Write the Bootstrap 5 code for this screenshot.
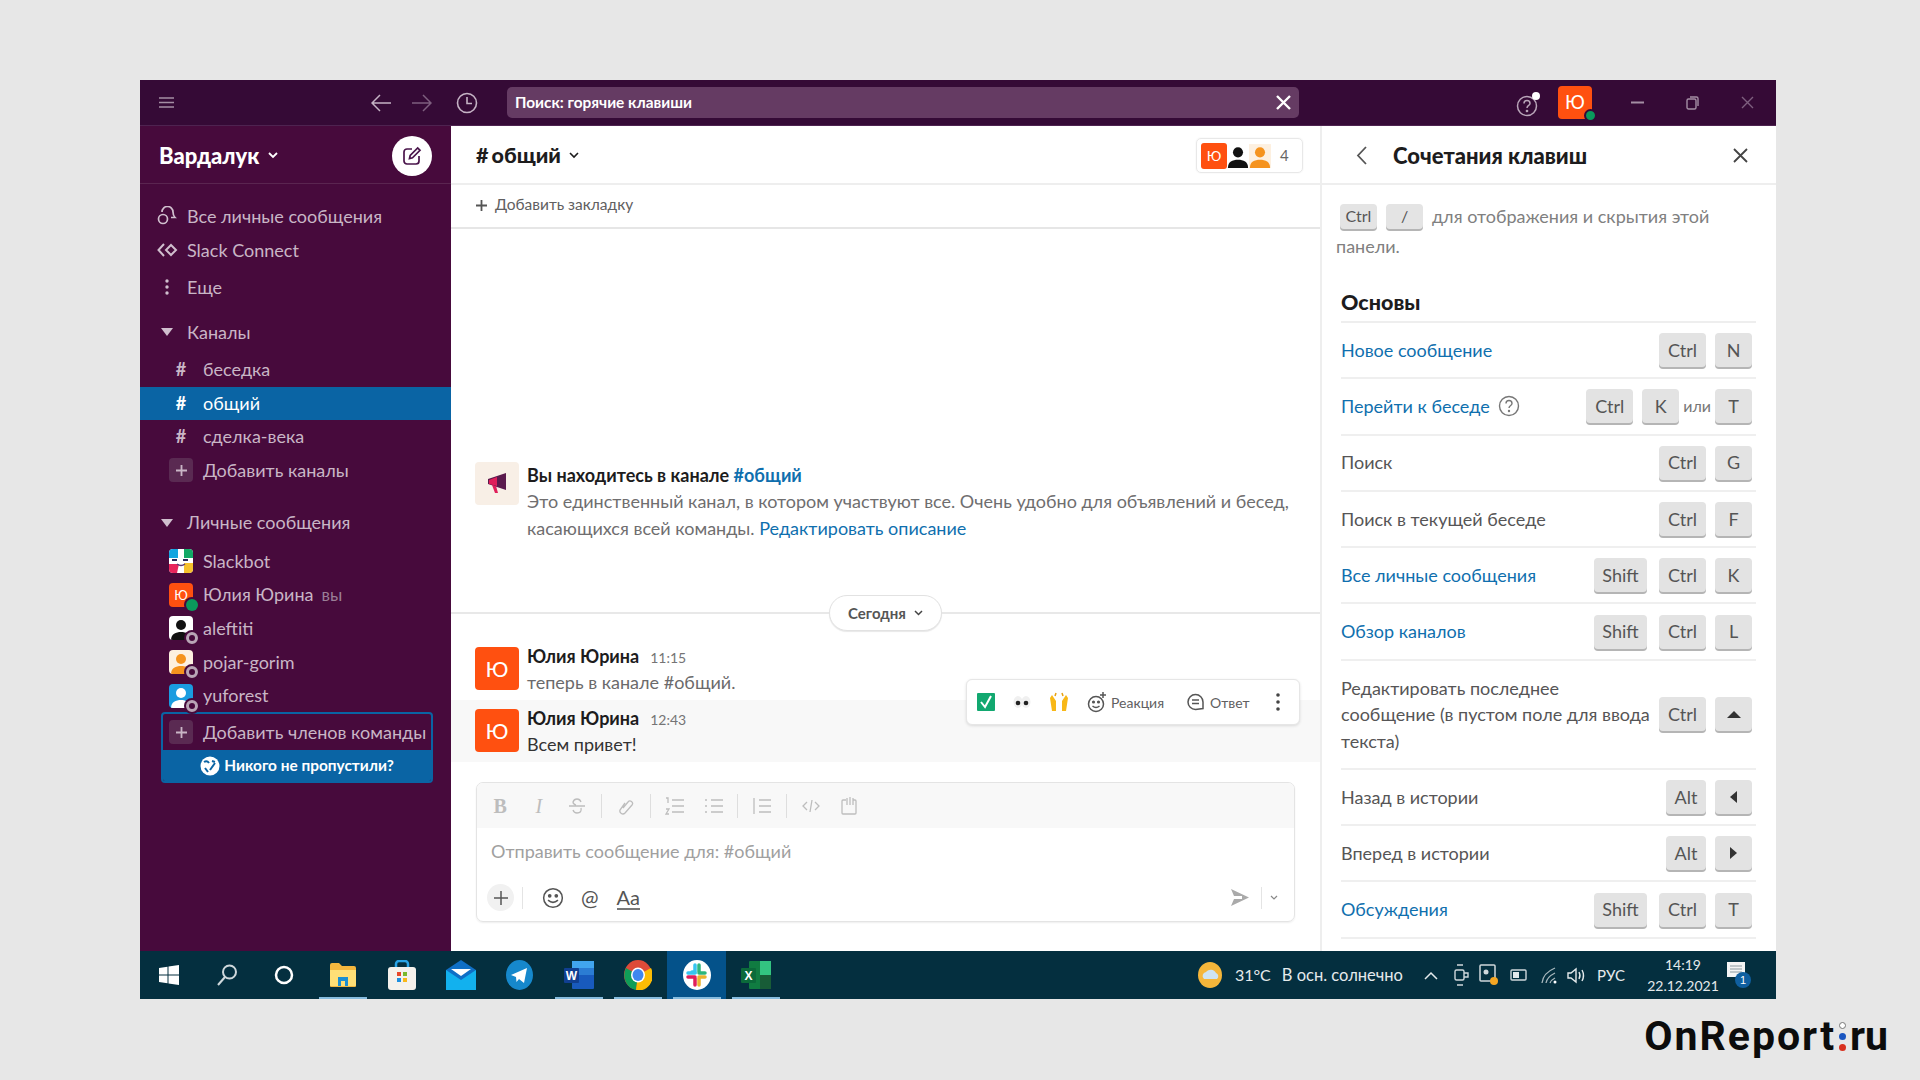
<!DOCTYPE html>
<html lang="ru">
<head>
    <meta charset="UTF-8">
    <title>Slack - сочетания клавиш</title>
    <link href="https://cdn.jsdelivr.net/npm/bootstrap@5.3.0/dist/css/bootstrap.min.css" rel="stylesheet">
    <style>
        body { background: #e7e7e7; font-family: Lato, "Noto Sans", "Open Sans", sans-serif; font-size: 18px; color: #1d1c1d; height: 1080px; overflow: hidden; }
        .shot { padding: 80px 144px 0 140px; }
        .app { width: 1636px; height: 919px; background: #fff; }
        /* title bar */
        .titlebar { height: 46px; background: #350a36; border-bottom: 1px solid #4e2350; color: #c5b3c5; }
        .tb-menu { width: 54px; padding-left: 19px; }
        .tb-nav { width: 313px; padding-right: 29px; gap: 21px; }
        .tb-hist { margin-left: 3px; }
        .searchbox { width: 792px; height: 31px; background: #653b63; border-radius: 5px; color: #fff; font-size: 15.4px; font-weight: 700; padding: 0 8px; }
        .tb-right { width: 477px; }
        .me-avatar { width: 34px; height: 33px; background: #ff5010; color: #fff; border-radius: 4px; font-size: 19px; margin-left: 18px; }
        .dot-on { position: absolute; right: -5px; bottom: -3px; width: 13px; height: 13px; background: #0a9a5c; border: 2px solid #350a36; border-radius: 50%; }
        /* sidebar */
        .mainrow { height: 825px; }
        .sidebar { width: 311px; background: #470a3c; color: #c9b6c6; flex: none; }
        .ws-head { height: 58px; border-bottom: 1px solid #5a2550; padding: 2px 19px 0 19px; margin-bottom: 15px; }
        .ws-name { color: #fff; font-size: 22px; font-weight: 900; }
        .compose { width: 40px; height: 40px; border-radius: 50%; background: #fff; }
        .side-item { height: 34px; display: flex; align-items: center; white-space: nowrap; }
        .side-top { padding-left: 16px; }
        .side-top .ic { width: 22px; margin-right: 9px; display: flex; justify-content: center; }
        .side-ch { padding-left: 29px; height: 33.5px; }
        .side-ch .ic { width: 24px; margin-right: 10px; display: flex; justify-content: center; font-weight: 700; font-size: 18px; }
        .side-ch.on { background: #0a64a4; color: #fff; }
        .side-dm { height: 33.6px; }
        .side-ava { width: 24px; height: 24px; border-radius: 4px; margin-right: 10px; position: relative; flex: none; overflow: visible; }
        .side-ava svg { display: block; border-radius: 4px; }
        .you-tag { font-size: 17px; color: #9a7f97; }
        .dot-off { position: absolute; right: -5px; bottom: -4px; width: 12px; height: 12px; border-radius: 50%; background: #b9a5b6; border: 3px solid #b9a5b6; box-shadow: 0 0 0 2px #470a3c; }
        .dot-off::after { content: ""; display: block; width: 6px; height: 6px; margin: 0; border-radius: 50%; background: #470a3c; }
        .dot-green { position: absolute; right: -5px; bottom: -4px; width: 12px; height: 12px; border-radius: 50%; background: #0a9a5c; box-shadow: 0 0 0 2px #470a3c; }
        .addbox { width: 272px; margin: 0 0 0 21px; border: 2px solid #0a64a4; border-radius: 4px; height: 71px; overflow: hidden; }
        .addbox .side-item { height: 36px; padding-left: 6px; }
        .add-plus { width: 24px; height: 24px; border-radius: 4px; background: #5a2a52; display: flex; align-items: center; justify-content: center; margin-right: 10px; flex: none; }
        .add-cta { height: 31px; background: #0a64a4; color: #fff; font-size: 15.4px; font-weight: 700; }
        /* channel */
        .channel { width: 871px; flex: none; border-right: 2px solid #eeeeee; }
        .ch-head { height: 59px; border-bottom: 2px solid #eeeeee; padding: 2px 17px 0 25px; }
        .ch-title { font-size: 21.5px; font-weight: 900; }
        .ch-hash { margin-right: 3px; }
        .members { width: 107px; height: 35px; border: 1px solid #e8e8e8; border-radius: 5px; padding: 0 4px; box-shadow: 0 0 2px #eee; }
        .mem-a { width: 26px; height: 26px; background: #ff5010; color: #fff; border-radius: 3px; font-size: 14px; }
        .mem-n { font-size: 15px; color: #666; margin-left: 9px; }
        .bookmarks { height: 44px; border-bottom: 2px solid #e6e6e6; padding: 0 0 2px 25px; color: #616061; font-size: 15.5px; }
        .chat { position: relative; }
        .intro { padding: 0 20px 0 24px; margin-bottom: 54px; line-height: 26.5px; color: #6f6e6f; }
        .intro-ic { width: 44px; height: 43px; background: #f8efe6; border-radius: 4px; margin-right: 8px; flex: none; }
        .t-blue { color: #0f6fae; }
        .t-dark { color: #1d1c1d; font-weight: 700; }
        .daysep { height: 35px; margin-bottom: 17px; position: relative; }
        .daysep::before { content: ""; position: absolute; left: 0; right: 0; top: 17px; height: 2px; background: #e8e8e8; }
        .daypill { position: relative; width: 113px; height: 36px; background: #fff; border: 1px solid #e2e2e2; border-radius: 18px; font-size: 15px; font-weight: 700; color: #555; box-shadow: 0 1px 1px #e8e8e8; }
        .msg { padding: 0 24px; line-height: 26px; color: #6b6a6b; }
        .msg-first { height: 53px; }
        .msg-next { height: 62px; background: #f8f8f8; padding-top: 9px; color: #333; }
        .msg-ava { width: 44px; height: 43px; background: #ff5010; color: #fff; border-radius: 4px; font-size: 22px; margin-right: 8px; flex: none; }
        .msg-text { margin-top: -4px; }
        .msg-head { height: 26px; }
        .msg-name { color: #1d1c1d; font-weight: 700; }
        .msg-time { font-size: 14px; line-height: 1; color: #757475; margin-left: 11px; }
        .hoverbar { position: absolute; right: 20px; bottom: 37px; width: 334px; height: 46px; background: #fff; border: 1px solid #e6e6e6; border-radius: 6px; box-shadow: 0 1px 3px rgba(0,0,0,.12); padding: 0 19px 0 10px; font-size: 14px; color: #616061; gap: 18px; }
        .hb-reply { margin-left: 4px; }
        .composer { height: 140px; margin: 20px 25px 29px 25px; border: 1px solid #e4e4e4; border-radius: 7px; box-shadow: 0 1px 2px #eee; overflow: hidden; }
        .fmt-bar { height: 45px; background: #f8f8f8; padding-left: 4px; color: #bdbdbd; }
        .fmt-btn { width: 38.5px; display: flex; align-items: center; justify-content: center; font-size: 20px; flex: none; }
        .fmt-serif { font-family: "Liberation Serif", serif; }
        .fmt-sep { width: 1px; height: 24px; background: #dedede; margin: 0 4.6px; flex: none; }
        .placeholder-txt { height: 46px; padding-left: 14px; color: #a0a0a0; font-size: 18px; }
        .cmp-foot { padding: 0 10px; height: 47px; color: #555; }
        .cmp-plus { width: 27px; height: 27px; border-radius: 50%; background: #f1f1f1; }
        .cmp-sep { width: 1px; height: 22px; background: #e4e4e4; }
        .cmp-emoji { margin-left: 11px; }
        .cmp-at { margin-left: 17px; font-size: 21px; }
        .cmp-aa { margin-left: 18px; font-size: 20px; line-height: 22px; border-bottom: 2px solid #777; }
        .cmp-send { margin-right: 4px; }
        .cmp-chev { margin-right: 6px; }
        /* shortcuts */
        .pane { width: 454px; flex: none; }
        .pane-head { height: 59px; border-bottom: 2px solid #eeeeee; padding: 2px 28px 0 34px; }
        .pane-title { font-size: 22px; font-weight: 900; margin-left: 26px; }
        .pane-body { padding: 16px 20px 0 19px; color: #616061; }
        .pane-hint { line-height: 30px; color: #808080; margin-left: -5px; }
        .pane-hint .keycap { height: 25px; font-size: 16px; margin-right: 5px; margin-left: 4px; background: #e4e4e4; }
        .hk-ctrl { width: 36px; min-width: 36px; }
        .hk-slash { width: 35px; min-width: 35px; }
        .sect { font-size: 21.5px; font-weight: 900; color: #1d1c1d; height: 41px; line-height: 40px; margin-top: 21px; border-bottom: 2px solid #eeeeee; }
        .sc-row { min-height: 56.3px; border-bottom: 2px solid #efefef; padding-right: 4px; color: #565556; line-height: 26.5px; }
        .sc-row.tall { height: 109px; }
        .sc-keys { gap: 9px; flex: none; margin-left: 8px; }
        .keycap { display: inline-flex; align-items: center; justify-content: center; height: 34px; padding: 0 9px; min-width: 37px; background: #e3e3e3; border-radius: 4px; box-shadow: 0 2px 0 #b5b5b5; color: #555; font-size: 18px; }
        .k-ctrl { width: 47px; }
        .k-shift { width: 53px; margin-right: 3px; }
        .k-alt { width: 40px; }
        .or-txt { color: #777; font-size: 16px; margin: 0 -5px; }
        /* taskbar */
        .taskbar { height: 48px; background: #042f3f; color: #e4eaec; font-size: 16px; }
        .tk-slot { width: 59px; height: 48px; display: flex; align-items: center; justify-content: center; flex: none; }
        .tk-open { background-image: linear-gradient(#86bcdf, #86bcdf); background-position: center bottom; background-size: 48px 2px; background-repeat: no-repeat; }
        .tk-active { background-color: #04528a; }
        .tray { padding-right: 24px; }
        .clock { font-size: 14px; line-height: 21px; text-align: center; width: 76px; }
        /* watermark */
        .onrep { width: 1748px; padding-top: 17px; font-family: Roboto, "Liberation Sans", sans-serif; font-size: 41px; font-weight: 700; color: #0c0c0c; line-height: 40px; }
        .onrep-name { letter-spacing: 2px; }
        .rdots { gap: 4px; margin: 0 4px 0 3px; }
        .rdots i { display: block; width: 7px; height: 7px; border-radius: 50%; }
        .rd-w { background: #fff; border: 1px solid #777; }
        .rd-b { background: #1a55c0; }
        .rd-r { background: #d8301e; }
    </style>
</head>
<body>
<div class="shot">
<div class="app d-flex flex-column">

    <!-- title bar -->
    <div class="titlebar d-flex align-items-center flex-none">
        <div class="tb-menu d-flex align-items-center">
            <svg width="15" height="13" viewBox="0 0 15 13" fill="none" stroke="#a48ea4" stroke-width="1.6"><path d="M0 2h15M0 6.500h15M0 11h15"/></svg>
        </div>
        <div class="tb-nav d-flex align-items-center justify-content-end">
            <svg width="20" height="18" viewBox="0 0 20 18" fill="none" stroke="#c5b3c5" stroke-width="1.5"><path d="M9 1 1 9l8 8M1 9h19"/></svg>
            <svg width="20" height="18" viewBox="0 0 20 18" fill="none" stroke="#7e5f7f" stroke-width="1.5"><path d="m11 1 8 8-8 8M19 9H0"/></svg>
            <svg class="tb-hist" width="22" height="22" viewBox="0 0 22 22" fill="none" stroke="#c5b3c5" stroke-width="1.6"><circle cx="11" cy="11" r="9.500"/><path d="M11 5v6.500h5"/></svg>
        </div>
        <div class="searchbox d-flex align-items-center justify-content-between">
            <span>Поиск: горячие клавиши</span>
            <svg width="15" height="15" viewBox="0 0 15 15" fill="none" stroke="#fff" stroke-width="2.400"><path d="m1 1 13 13M14 1 1 14"/></svg>
        </div>
        <div class="tb-right d-flex align-items-center">
            <div class="position-relative" style="margin-left:217px">
                <svg width="24" height="26" viewBox="0 0 24 26" fill="none" stroke="#b9a5b9" stroke-width="1.500"><circle cx="11" cy="15" r="9.500"/><path d="M8 12.500c0-4 6-4 6 0 0 2-3 2-3 4.500"/><circle cx="11" cy="20" r=".6"/><circle cx="20" cy="5" r="4" fill="#fff" stroke="none"/></svg>
            </div>
            <div class="me-avatar d-flex align-items-center justify-content-center position-relative">Ю<span class="dot-on"></span></div>
            <svg style="margin-left:39px" width="13" height="3" viewBox="0 0 13 3"><path d="M0 1.500h13" stroke="#a48ea4" stroke-width="2"/></svg>
            <svg style="margin-left:42px" width="13" height="14" viewBox="0 0 13 14" fill="none" stroke="#a48ea4" stroke-width="1.400"><rect x="1" y="3" width="9" height="10" rx="1.500"/><path d="M4 1h6.500A1.500 1.500 0 0 1 12 2.500V10"/></svg>
            <svg style="margin-left:42px" width="13" height="13" viewBox="0 0 13 13" fill="none" stroke="#7e5f7f" stroke-width="1.400"><path d="m1 1 11 11M12 1 1 12"/></svg>
        </div>
    </div>

    <div class="mainrow d-flex">

        <!-- sidebar -->
        <div class="sidebar">
            <div class="ws-head d-flex align-items-center justify-content-between">
                <div class="d-flex align-items-center gap-2"><span class="ws-name">Вардалук</span>
                    <svg width="10" height="7" viewBox="0 0 10 7" fill="none" stroke="#fff" stroke-width="1.800"><path d="m1 1 4 4 4-4"/></svg></div>
                <div class="compose d-flex align-items-center justify-content-center">
                    <svg width="20" height="20" viewBox="0 0 20 20" fill="none" stroke="#4a154b" stroke-width="1.700"><path d="M17 10v5a3 3 0 0 1-3 3H5a3 3 0 0 1-3-3V6a3 3 0 0 1 3-3h5"/><path d="m7.500 12.500.7-3L15.700 2l2.300 2.300-7.500 7.500z"/></svg>
                </div>
            </div>
            <div class="side-item side-top"><span class="ic"><svg width="20" height="20" viewBox="0 0 20 20" fill="none" stroke="#d0bfce" stroke-width="1.700"><circle cx="6" cy="13" r="4.500"/><path d="M5 6a5.500 5.500 0 0 1 11 0c0 2 .5 4 2 5.500h-4"/></svg></span>Все личные сообщения</div>
            <div class="side-item side-top"><span class="ic"><svg width="21" height="14" viewBox="0 0 21 14" fill="none" stroke="#d0bfce" stroke-width="2"><path d="M7 1 1.500 7 7 13"/><path d="m14 2 5 5-5 5-5-5z"/></svg></span>Slack Connect</div>
            <div class="side-item side-top" style="margin-top:3px"><span class="ic"><svg width="4" height="16" viewBox="0 0 4 16" fill="#d0bfce"><circle cx="2" cy="2" r="1.700"/><circle cx="2" cy="8" r="1.700"/><circle cx="2" cy="14" r="1.700"/></svg></span>Еще</div>
            <div class="side-item side-top" style="margin-top:11px"><span class="ic"><svg width="12" height="8" viewBox="0 0 12 8" fill="#d0bfce"><path d="M0 0h12L6 8z"/></svg></span>Каналы</div>
            <div class="side-item side-ch" style="margin-top:4px"><span class="ic">#</span>беседка</div>
            <div class="side-item side-ch on"><span class="ic">#</span>общий</div>
            <div class="side-item side-ch"><span class="ic">#</span>сделка-века</div>
            <div class="side-item side-ch"><span class="add-plus"><svg width="11" height="11" viewBox="0 0 12 12" stroke="#c9b6c6" stroke-width="2"><path d="M6 0v12M0 6h12"/></svg></span>Добавить каналы</div>
            <div class="side-item side-top" style="margin-top:18.500px"><span class="ic"><svg width="12" height="8" viewBox="0 0 12 8" fill="#d0bfce"><path d="M0 0h12L6 8z"/></svg></span>Личные сообщения</div>

            <div class="side-item side-ch side-dm" style="margin-top:5px"><span class="side-ava">
                <svg width="24" height="24" viewBox="0 0 24 24"><rect width="24" height="24" fill="#fff"/><path d="M0 0h9v9H0z" fill="#12a5e0"/><path d="M15 0h9v9h-9z" fill="#12a866"/><path d="M0 15h10l-2 9H0z" fill="#e8255c"/><path d="M15 14h9v10h-9z" fill="#f6c02c"/><path d="M3 11h18" stroke="#2c2c5a" stroke-width="2" stroke-dasharray="5 6"/><path d="M8 15q4 3 8 0" stroke="#5c3a78" fill="none" stroke-width="1.500"/></svg></span>Slackbot</div>
            <div class="side-item side-ch side-dm"><span class="side-ava"><svg width="24" height="24" viewBox="0 0 24 24"><rect width="24" height="24" fill="#ff5010"/><text x="12" y="17" font-size="13" fill="#fff" text-anchor="middle" font-family="Lato, Noto Sans, sans-serif">Ю</text></svg><span class="dot-green"></span></span>Юлия Юрина<span class="ms-2 you-tag">вы</span></div>
            <div class="side-item side-ch side-dm"><span class="side-ava"><svg width="24" height="24" viewBox="0 0 24 24"><rect width="24" height="24" fill="#fff"/><circle cx="12" cy="9" r="5" fill="#111"/><path d="M2 24c0-6 5-8 10-8s10 2 10 8z" fill="#111"/></svg><span class="dot-off"></span></span>aleftiti</div>
            <div class="side-item side-ch side-dm"><span class="side-ava"><svg width="24" height="24" viewBox="0 0 24 24"><rect width="24" height="24" fill="#fdf0e0"/><circle cx="12" cy="9" r="5" fill="#f5931e"/><path d="M2 24c0-6 5-8 10-8s10 2 10 8z" fill="#f5931e"/></svg><span class="dot-off"></span></span>pojar-gorim</div>
            <div class="side-item side-ch side-dm"><span class="side-ava"><svg width="24" height="24" viewBox="0 0 24 24"><rect width="24" height="24" fill="#1a9ce0"/><circle cx="12" cy="9" r="5" fill="#fff"/><path d="M2 24c0-6 5-8 10-8s10 2 10 8z" fill="#fff"/></svg><span class="dot-off"></span></span>yuforest</div>

            <div class="addbox">
                <div class="side-item"><span class="add-plus"><svg width="11" height="11" viewBox="0 0 12 12" stroke="#c9b6c6" stroke-width="2"><path d="M6 0v12M0 6h12"/></svg></span>Добавить членов команды</div>
                <div class="add-cta d-flex align-items-center justify-content-center gap-1">
                    <svg width="20" height="20" viewBox="0 0 20 20"><circle cx="10" cy="10" r="9.500" fill="#fff"/><path d="M4 6q3-2 5 1M5 12l3 4M10 14l5-7M12 5l3 1" fill="none" stroke="#0a64a4" stroke-width="2"/></svg>
                    <span>Никого не пропустили?</span>
                </div>
            </div>
        </div>

        <!-- channel -->
        <div class="channel d-flex flex-column">
            <div class="ch-head d-flex align-items-center justify-content-between">
                <div class="d-flex align-items-center gap-2"><span class="ch-title"><span class="ch-hash">#</span>общий</span>
                    <svg width="10" height="7" viewBox="0 0 10 7" fill="none" stroke="#1d1c1d" stroke-width="1.600"><path d="m1 1 4 4 4-4"/></svg></div>
                <div class="members d-flex align-items-center">
                    <span class="mem-a d-flex align-items-center justify-content-center">Ю</span>
                    <svg width="22" height="26" viewBox="0 0 24 26"><rect width="24" height="26" fill="#fff"/><circle cx="12" cy="9" r="5.500" fill="#111"/><path d="M1 26c0-7 5-9 11-9s11 2 11 9z" fill="#111"/></svg>
                    <svg width="22" height="26" viewBox="0 0 24 26"><rect width="24" height="26" fill="#fdf0e0"/><circle cx="12" cy="9" r="5.500" fill="#f5931e"/><path d="M1 26c0-7 5-9 11-9s11 2 11 9z" fill="#f5931e"/></svg>
                    <span class="mem-n">4</span>
                </div>
            </div>
            <div class="bookmarks d-flex align-items-center gap-2 flex-none">
                <svg width="11" height="11" viewBox="0 0 11 11" stroke="#555" stroke-width="1.800"><path d="M5.500 0v11M0 5.500h11"/></svg>
                Добавить закладку
            </div>
            <div class="chat flex-grow-1 d-flex flex-column justify-content-end">
                <div class="intro d-flex">
                    <div class="intro-ic d-flex align-items-center justify-content-center">
                        <svg width="24" height="26" viewBox="0 0 24 26"><path d="M3 9 21 3v17L3 14z" fill="#5b1a4d"/><path d="M4 10l8-3v9l-8-2z" fill="#e01e5a"/><path d="M7 15l3 8h3l-2-7z" fill="#e01e5a"/></svg>
                    </div>
                    <div>
                        <div class="t-dark">Вы находитесь в канале <span class="t-blue">#общий</span></div>
                        <div>Это единственный канал, в котором участвуют все. Очень удобно для объявлений и бесед,<br>касающихся всей команды. <span class="t-blue">Редактировать описание</span></div>
                    </div>
                </div>
                <div class="daysep d-flex justify-content-center">
                    <div class="daypill d-flex align-items-center justify-content-center gap-2">Сегодня
                        <svg width="9" height="6" viewBox="0 0 9 6" fill="none" stroke="#444" stroke-width="1.500"><path d="m1 1 3.500 3.500L8 1"/></svg></div>
                </div>
                <div class="msg msg-first d-flex">
                    <div class="msg-ava d-flex align-items-center justify-content-center">Ю</div>
                    <div class="msg-text"><div class="msg-head"><span class="msg-name">Юлия Юрина</span><span class="msg-time">11:15</span></div><div>теперь в канале #общий.</div></div>
                </div>
                <div class="msg msg-next d-flex">
                    <div class="msg-ava d-flex align-items-center justify-content-center">Ю</div>
                    <div class="msg-text"><div class="msg-head"><span class="msg-name">Юлия Юрина</span><span class="msg-time">12:43</span></div><div>Всем привет!</div></div>
                </div>
                <div class="hoverbar d-flex align-items-center">
                    <svg width="18" height="18" viewBox="0 0 18 18"><rect width="18" height="18" rx="1" fill="#12a870"/><path d="m4 9 4 5 6-11" fill="none" stroke="#fff" stroke-width="2"/></svg>
                    <svg width="18" height="14" viewBox="0 0 18 14"><ellipse cx="5" cy="7" rx="4.500" ry="6" fill="#f0f0f0"/><ellipse cx="13" cy="7" rx="4.500" ry="6" fill="#f0f0f0"/><circle cx="5" cy="8" r="2.300" fill="#222"/><circle cx="13" cy="8" r="2.300" fill="#222"/></svg>
                    <svg width="20" height="20" viewBox="0 0 20 20" fill="#f8b818"><path d="M1 6l2-3 4 6v10H3zM19 6l-2-3-4 6v10h4z"/><path d="M6 4l1-3M14 4l-1-3" stroke="#e8a010" stroke-width="1.500"/></svg>
                    <span class="d-flex align-items-center gap-1">
                        <svg width="20" height="22" viewBox="0 0 20 22" fill="none" stroke="#555" stroke-width="1.500"><circle cx="9" cy="13" r="7.500"/><circle cx="6.500" cy="11" r=".8" fill="#555"/><circle cx="11.500" cy="11" r=".8" fill="#555"/><path d="M5.500 15q3.500 3 7 0M16 1v6M13 4h6"/></svg>Реакция</span>
                    <span class="hb-reply d-flex align-items-center gap-1">
                        <svg width="20" height="20" viewBox="0 0 20 20" fill="none" stroke="#555" stroke-width="1.500"><path d="M17 16.500V10a7.500 7.500 0 1 0-7.500 7.500z"/><path d="M6 8h7M6 11.500h7"/></svg>Ответ</span>
                    <svg class="ms-auto" width="4" height="18" viewBox="0 0 4 18" fill="#444"><circle cx="2" cy="2" r="1.800"/><circle cx="2" cy="9" r="1.800"/><circle cx="2" cy="16" r="1.800"/></svg>
                </div>
            </div>
            <div class="composer flex-none">
                <div class="fmt-bar d-flex align-items-center">
                    <span class="fmt-btn fmt-serif fw-bold">B</span>
                    <span class="fmt-btn fmt-serif fst-italic">I</span>
                    <span class="fmt-btn"><svg width="18" height="18" viewBox="0 0 18 18" fill="none" stroke="#bdbdbd" stroke-width="1.300"><path d="M13 5q-1-3-4-3T5 5q0 2 3 3M1 9h16M13 11q1 5-4 5-3 0-4-3"/></svg></span>
                    <span class="fmt-sep"></span>
                    <span class="fmt-btn"><svg width="18" height="18" viewBox="0 0 18 18" fill="none" stroke="#bdbdbd" stroke-width="1.300"><path d="M6 11l5-6a2.500 2.500 0 0 1 4 3l-7 8a3 3 0 0 1-5-3l5-7"/></svg></span>
                    <span class="fmt-sep"></span>
                    <span class="fmt-btn"><svg width="19" height="18" viewBox="0 0 19 18" fill="none" stroke="#bdbdbd" stroke-width="1.300"><path d="M7 3h12M7 9h12M7 15h12M1 1h2v5M1 12h3l-3 5h3"/></svg></span>
                    <span class="fmt-btn"><svg width="19" height="18" viewBox="0 0 19 18" fill="none" stroke="#bdbdbd" stroke-width="1.300"><path d="M7 3h12M7 9h12M7 15h12M1 3h2M1 9h2M1 15h2"/></svg></span>
                    <span class="fmt-sep"></span>
                    <span class="fmt-btn"><svg width="18" height="18" viewBox="0 0 18 18" fill="none" stroke="#bdbdbd" stroke-width="1.300"><path d="M1 1v16M6 3h12M6 9h12M6 15h12"/></svg></span>
                    <span class="fmt-sep"></span>
                    <span class="fmt-btn"><svg width="18" height="14" viewBox="0 0 18 14" fill="none" stroke="#bdbdbd" stroke-width="1.300"><path d="M5 3 1 7l4 4M13 3l4 4-4 4M10 1 8 13"/></svg></span>
                    <span class="fmt-btn"><svg width="18" height="20" viewBox="0 0 18 20" fill="none" stroke="#bdbdbd" stroke-width="1.300"><path d="M6 4H3a1 1 0 0 0-1 1v12a1 1 0 0 0 1 1h12a1 1 0 0 0 1-1V5a1 1 0 0 0-1-1h-2M7 9V2M10 9V1M13 9V2"/></svg></span>
                </div>
                <div class="placeholder-txt d-flex align-items-center">Отправить сообщение для: #общий</div>
                <div class="cmp-foot d-flex align-items-center">
                    <span class="cmp-plus d-flex align-items-center justify-content-center"><svg width="14" height="14" viewBox="0 0 14 14" stroke="#555" stroke-width="1.500"><path d="M7 0v14M0 7h14"/></svg></span>
                    <span class="cmp-sep mx-2"></span>
                    <svg class="cmp-emoji" width="22" height="22" viewBox="0 0 20 20" fill="none" stroke="#555" stroke-width="1.400"><circle cx="10" cy="10" r="8.500"/><circle cx="7" cy="8" r="1" fill="#555"/><circle cx="13" cy="8" r="1" fill="#555"/><path d="M5.500 12q4.500 4 9 0"/></svg>
                    <span class="cmp-at">@</span>
                    <span class="cmp-aa">Aa</span>
                    <svg class="ms-auto cmp-send" width="18" height="17" viewBox="0 0 18 17" fill="#aaa"><path d="M0 0l18 8.500L0 17l3-7h8V7H3z"/></svg>
                    <span class="cmp-sep mx-2"></span>
                    <svg class="cmp-chev" width="8" height="5" viewBox="0 0 8 5" fill="none" stroke="#888" stroke-width="1.200"><path d="m1 1 3 3 3-3"/></svg>
                </div>
            </div>
        </div>

        <!-- shortcuts -->
        <div class="pane d-flex flex-column">
            <div class="pane-head d-flex align-items-center">
                <svg width="11" height="19" viewBox="0 0 11 19" fill="none" stroke="#555" stroke-width="1.800"><path d="M10 1 2 9.500l8 8.500"/></svg>
                <span class="pane-title flex-grow-1">Сочетания клавиш</span>
                <svg width="15" height="15" viewBox="0 0 15 15" fill="none" stroke="#444" stroke-width="1.800"><path d="m1 1 13 13M14 1 1 14"/></svg>
            </div>
            <div class="pane-body">
                <div class="pane-hint">
                    <div class="d-flex align-items-center"><span class="keycap hk-ctrl">Ctrl</span><span class="keycap hk-slash">/</span><span class="ms-1">для отображения и скрытия этой</span></div>
                    <div>панели.</div>
                </div>
                <div class="sect">Основы</div>
                <div class="sc-row d-flex align-items-center justify-content-between"><span class="t-blue">Новое сообщение</span><div class="sc-keys d-flex"><span class="keycap k-ctrl">Ctrl</span><span class="keycap">N</span></div></div>
                <div class="sc-row d-flex align-items-center justify-content-between"><span class="t-blue d-flex align-items-center gap-2">Перейти к беседе <svg width="22" height="22" viewBox="0 0 22 22" fill="none" stroke="#777" stroke-width="1.400"><circle cx="11" cy="11" r="9.500"/><path d="M8 8.500c0-4 6-4 6 0 0 2-3 2-3 4.500"/><circle cx="11" cy="16" r=".5"/></svg></span><div class="sc-keys d-flex align-items-center"><span class="keycap k-ctrl">Ctrl</span><span class="keycap">K</span><span class="or-txt">или</span><span class="keycap">T</span></div></div>
                <div class="sc-row d-flex align-items-center justify-content-between"><span>Поиск</span><div class="sc-keys d-flex"><span class="keycap k-ctrl">Ctrl</span><span class="keycap">G</span></div></div>
                <div class="sc-row d-flex align-items-center justify-content-between"><span>Поиск в текущей беседе</span><div class="sc-keys d-flex"><span class="keycap k-ctrl">Ctrl</span><span class="keycap">F</span></div></div>
                <div class="sc-row d-flex align-items-center justify-content-between"><span class="t-blue">Все личные сообщения</span><div class="sc-keys d-flex"><span class="keycap k-shift">Shift</span><span class="keycap k-ctrl">Ctrl</span><span class="keycap">K</span></div></div>
                <div class="sc-row d-flex align-items-center justify-content-between"><span class="t-blue">Обзор каналов</span><div class="sc-keys d-flex"><span class="keycap k-shift">Shift</span><span class="keycap k-ctrl">Ctrl</span><span class="keycap">L</span></div></div>
                <div class="sc-row tall d-flex align-items-center justify-content-between"><span>Редактировать последнее сообщение (в пустом поле для ввода текста)</span><div class="sc-keys d-flex"><span class="keycap k-ctrl">Ctrl</span><span class="keycap"><svg width="14" height="7" viewBox="0 0 14 7" fill="#333"><path d="M7 0l7 7H0z"/></svg></span></div></div>
                <div class="sc-row d-flex align-items-center justify-content-between"><span>Назад в истории</span><div class="sc-keys d-flex"><span class="keycap k-alt">Alt</span><span class="keycap"><svg width="7" height="12" viewBox="0 0 7 12" fill="#333"><path d="M7 0v12L0 6z"/></svg></span></div></div>
                <div class="sc-row d-flex align-items-center justify-content-between"><span>Вперед в истории</span><div class="sc-keys d-flex"><span class="keycap k-alt">Alt</span><span class="keycap"><svg width="7" height="12" viewBox="0 0 7 12" fill="#333"><path d="M0 0v12l7-6z"/></svg></span></div></div>
                <div class="sc-row d-flex align-items-center justify-content-between"><span class="t-blue">Обсуждения</span><div class="sc-keys d-flex"><span class="keycap k-shift">Shift</span><span class="keycap k-ctrl">Ctrl</span><span class="keycap">T</span></div></div>
            </div>
        </div>
    </div>

    <!-- taskbar -->
    <div class="taskbar d-flex align-items-center">
        <div class="tk-slot" style="width:58px"><svg width="20" height="20" viewBox="0 0 20 20" fill="#fff"><path d="M0 3l8.500-1.300V9.500H0zM9.500 1.500 20 0v9.500H9.500zM0 10.500h8.500v7.800L0 17zM9.500 10.500H20V20L9.500 18.500z"/></svg></div>
        <div class="tk-slot" style="width:57px"><svg width="22" height="24" viewBox="0 0 22 24" fill="none" stroke="#cfd8dc" stroke-width="2"><circle cx="13.500" cy="9" r="6.500"/><path d="m9 14-7 8"/></svg></div>
        <div class="tk-slot" style="width:57px"><svg width="20" height="20" viewBox="0 0 20 20" fill="none" stroke="#fff" stroke-width="2.500"><circle cx="10" cy="10" r="8"/></svg></div>
        <div class="tk-slot tk-open" style="margin-left:1px"><svg width="28" height="26" viewBox="0 0 28 26"><path d="M1 3a2 2 0 0 1 2-2h7l3 3h12a2 2 0 0 1 2 2v18a1 1 0 0 1-1 1H2a1 1 0 0 1-1-1z" fill="#f3b73e"/><path d="M1 8h26v15a1 1 0 0 1-1 1H2a1 1 0 0 1-1-1z" fill="#ffdf76"/><path d="M9 15h10v9H9z" fill="#1b8ed1"/><path d="M12 19h4v5h-4z" fill="#ffdf76"/></svg></div>
        <div class="tk-slot"><svg width="28" height="30" viewBox="0 0 28 30"><path d="M8 8V4a3 3 0 0 1 3-3h6a3 3 0 0 1 3 3v4" fill="none" stroke="#29a3e6" stroke-width="2.500"/><rect y="7" width="28" height="23" rx="3" fill="#f4f1ec"/><path d="M9 12h4v4H9z" fill="#e8472a"/><path d="M15 12h4v4h-4z" fill="#7ab82c"/><path d="M9 18h4v4H9z" fill="#1d8fe0"/><path d="M15 18h4v4h-4z" fill="#f8b818"/></svg></div>
        <div class="tk-slot"><svg width="30" height="30" viewBox="0 0 30 30"><path d="M15 0 30 10v20H0V10z" fill="#0f6fc6"/><path d="M0 10v20h30V10L15 20z" fill="#12b1ee"/><path d="M5 9h20L15 16z" fill="#fff"/></svg></div>
        <div class="tk-slot"><svg width="27" height="30" viewBox="0 0 27 30"><ellipse cx="13.500" cy="15" rx="13.500" ry="15" fill="#1688cc"/><path d="m5 15 16-7-3 15-5-4-2.500 3-.5-5z" fill="#fff"/></svg></div>
        <div class="tk-slot tk-open"><svg width="30" height="30" viewBox="0 0 30 30"><rect x="8" y="1" width="22" height="28" rx="1" fill="#185abd"/><path d="M8 8h22v7H8z" fill="#2b7cd3"/><path d="M8 1h22v7H8z" fill="#41a5ee"/><rect y="8" width="15" height="15" rx="1" fill="#103f91"/><text x="7.500" y="20" fill="#fff" font-size="12" font-weight="700" text-anchor="middle" font-family="Liberation Sans, sans-serif">W</text></svg></div>
        <div class="tk-slot tk-open"><svg width="28" height="30" viewBox="0 0 28 30"><ellipse cx="14" cy="15" rx="14" ry="15" fill="#dd4b39"/><path d="M14 15 2 8a14 15 0 0 0 10 22z" fill="#0f9d58"/><path d="M14 15 27 8a14 15 0 0 1-15 22z" fill="#fbbc05"/><ellipse cx="14" cy="15" rx="7" ry="7.500" fill="#fff"/><ellipse cx="14" cy="15" rx="5.500" ry="6" fill="#3f87f0"/></svg></div>
        <div class="tk-slot tk-active tk-open"><svg width="28" height="30" viewBox="0 0 28 30"><ellipse cx="14" cy="15" rx="14" ry="15" fill="#fff"/><path d="M12 5v7H9" fill="none" stroke="#36c5f0" stroke-width="3.500" stroke-linecap="round"/><path d="M5 13h7" stroke="#36c5f0" stroke-width="3.500" stroke-linecap="round"/><path d="M16 5v7M22 13h-6" stroke="#2eb67d" stroke-width="3.500" stroke-linecap="round"/><path d="M16 25v-7M22 17h-6" stroke="#ecb22e" stroke-width="3.500" stroke-linecap="round"/><path d="M12 25v-7M5 17h7" stroke="#e01e5a" stroke-width="3.500" stroke-linecap="round"/></svg></div>
        <div class="tk-slot tk-open"><svg width="30" height="30" viewBox="0 0 30 30"><rect x="8" y="1" width="22" height="28" rx="1" fill="#107c41"/><path d="M19 1h11v14H19z" fill="#33c481"/><path d="M19 15h11v14H19z" fill="#185c37"/><rect y="8" width="15" height="15" rx="1" fill="#0b6a3a"/><text x="7.500" y="20" fill="#fff" font-size="12" font-weight="700" text-anchor="middle" font-family="Liberation Sans, sans-serif">X</text></svg></div>

        <div class="tray ms-auto d-flex align-items-center">
            <svg width="24" height="26" viewBox="0 0 24 26"><ellipse cx="12" cy="13" rx="12" ry="13" fill="#f5b63a"/><path d="M6 17a4 4 0 0 1 2-7 6 6 0 0 1 10 1 3.500 3.500 0 0 1 1 6z" fill="#cfe4f2"/></svg>
            <span style="margin-left:13px">31°C</span>
            <span style="margin-left:11px;font-size:16.5px">В осн. солнечно</span>
            <svg style="margin-left:21px" width="14" height="9" viewBox="0 0 14 9" fill="none" stroke="#e4eaec" stroke-width="1.500"><path d="m1 8 6-6 6 6"/></svg>
            <svg style="margin-left:15px" width="16" height="24" viewBox="0 0 16 24" fill="none" stroke="#cfd8dc" stroke-width="1.400"><rect x="2" y="7" width="9" height="10" rx="1.500"/><path d="M11 10h4v4h-4M4 2h6M4 22h6"/></svg>
            <svg style="margin-left:10px" width="19" height="22" viewBox="0 0 19 22"><rect x="1" y="1" width="15" height="16" rx="1" fill="none" stroke="#cfd8dc" stroke-width="1.500"/><circle cx="7" cy="8" r="2.500" fill="#cfd8dc"/><circle cx="15" cy="17" r="4" fill="#f5a623"/></svg>
            <svg style="margin-left:12px" width="17" height="12" viewBox="0 0 17 12" fill="none" stroke="#cfd8dc" stroke-width="1.400"><rect x="1" y="1" width="15" height="10" rx="1"/><rect x="3" y="3" width="6" height="6" fill="#e4eaec" stroke="none"/></svg>
            <svg style="margin-left:14px" width="18" height="17" viewBox="0 0 18 17" fill="none" stroke="#a9b8be" stroke-width="1.300"><path d="M1 16Q2 6 14 1M5 16q1-6 9-10M9 16q1-3 5-5"/><circle cx="14" cy="15" r="1.500" fill="#fff" stroke="none"/></svg>
            <svg style="margin-left:8px" width="20" height="17" viewBox="0 0 20 17" fill="none" stroke="#e4eaec" stroke-width="1.400"><path d="M1 6h3l5-4v13l-5-4H1zM12 5q2 3.500 0 7M15 3q3 5.500 0 11"/></svg>
            <span style="margin-left:10px;font-size:15px">РУС</span>
            <div class="clock" style="margin-left:20px"><div>14:19</div><div>22.12.2021</div></div>
            <svg style="margin-left:5px" width="26" height="28" viewBox="0 0 26 28"><path d="M1 1h18v15H1z" fill="#f4f4f4"/><path d="M4 5h12M4 8h12M4 11h12" stroke="#8c9aa0"/><circle cx="17" cy="19" r="8" fill="#0f5fa0"/><text x="17" y="23" fill="#fff" font-size="11" text-anchor="middle" font-family="Liberation Sans, sans-serif">1</text></svg>
        </div>
    </div>
</div>
<div class="onrep d-flex justify-content-end align-items-center">
    <span class="onrep-name">OnReport</span>
    <span class="rdots d-flex flex-column"><i class="rd-w"></i><i class="rd-b"></i><i class="rd-r"></i></span>
    <span>ru</span>
</div>
</div>
</body>
</html>
